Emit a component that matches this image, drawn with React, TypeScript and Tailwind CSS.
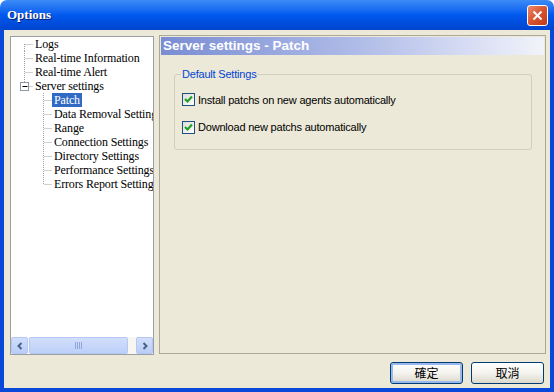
import React from "react";

type Pos = "first" | "mid" | "last";

interface TreeItem {
  label: string;
  depth: number;
  pos: Pos;
  toggle?: boolean;
  selected?: boolean;
}

const items: TreeItem[] = [
  { label: "Logs", depth: 0, pos: "first" },
  { label: "Real-time Information", depth: 0, pos: "mid" },
  { label: "Real-time Alert", depth: 0, pos: "mid" },
  { label: "Server settings", depth: 0, pos: "last", toggle: true },
  { label: "Patch", depth: 1, pos: "mid", selected: true },
  { label: "Data Removal Settings", depth: 1, pos: "mid" },
  { label: "Range", depth: 1, pos: "mid" },
  { label: "Connection Settings", depth: 1, pos: "mid" },
  { label: "Directory Settings", depth: 1, pos: "mid" },
  { label: "Performance Settings", depth: 1, pos: "mid" },
  { label: "Errors Report Settings", depth: 1, pos: "last" },
];

// dotted connector lines drawn in front of each tree label
function Connector({ depth, pos, toggle }: { depth: number; pos: Pos; toggle?: boolean }) {
  const w = 22 + depth * 19;
  const x = 13.5 + depth * 19;
  const y1 = pos === "first" ? 7 : 0;
  const y2 = pos === "last" ? 7 : 14;
  return (
    <svg width={w} height={14} className="shrink-0">
      <line x1={x} y1={y1} x2={x} y2={y2} stroke="#A0A0A0" strokeDasharray="1 1" />
      <line x1={x + 1} y1={7.5} x2={w} y2={7.5} stroke="#A0A0A0" strokeDasharray="1 1" />
      {toggle && (
        <g>
          <rect x={x - 4} y={3.5} width={8} height={8} fill="#fff" stroke="#8A97A8" />
          <line x1={x - 2} y1={7.5} x2={x + 3} y2={7.5} stroke="#000" />
        </g>
      )}
    </svg>
  );
}

function ScrollButton({ dir }: { dir: "left" | "right" }) {
  return (
    <div className="w-[17px] h-[17px] shrink-0 rounded-[2px] border border-[#B4C8F6] bg-gradient-to-b from-[#D2DEFC] to-[#B9CDF7] flex items-center justify-center">
      <svg width="8" height="8" viewBox="0 0 8 8">
        {dir === "left" ? (
          <polyline points="5.5,1 2.5,4 5.5,7" fill="none" stroke="#4D6185" strokeWidth="2" />
        ) : (
          <polyline points="2.5,1 5.5,4 2.5,7" fill="none" stroke="#4D6185" strokeWidth="2" />
        )}
      </svg>
    </div>
  );
}

function CheckBox() {
  return (
    <div className="w-[13px] h-[13px] shrink-0 border border-[#1C5180] bg-gradient-to-br from-[#DCDCD7] to-white flex items-center justify-center">
      <svg width="9" height="9" viewBox="0 0 9 9">
        <polyline points="1,4 3.5,6.5 8,1.5" fill="none" stroke="#21A121" strokeWidth="2.2" />
      </svg>
    </div>
  );
}

function XpButton({ label, primary }: { label: string; primary?: boolean }) {
  return (
    <button
      className={
        "w-[73px] h-[22px] rounded-[3px] border border-[#003C74] bg-gradient-to-b from-white via-[#F4F3EE] to-[#DCD8CC] text-[12px] text-black " +
        (primary ? "shadow-[inset_0_0_0_2px_#98B8EE]" : "")
      }
      style={{ fontFamily: '"Noto Sans CJK TC", "Liberation Sans", sans-serif' }}
    >
      {label}
    </button>
  );
}

export default function App() {
  return (
    <div className="w-[554px] h-[392px] flex flex-col bg-white">
      {/* title bar */}
      <div className="h-[30px] shrink-0 rounded-t-[7px] bg-gradient-to-b from-[#3D8BF7] via-[#0058EE] to-[#0045CF] flex items-center justify-between pl-[7px] pr-[6px]">
        <span
          className="text-white text-[13px] font-bold [text-shadow:1px_1px_0_#0A1E6E]"
          style={{ fontFamily: '"Liberation Serif", serif' }}
        >
          Options
        </span>
        <div className="w-[21px] h-[21px] rounded-[3px] border border-white bg-gradient-to-br from-[#E98A6C] via-[#D9532F] to-[#BF3A17] flex items-center justify-center">
          <svg width="11" height="11" viewBox="0 0 11 11">
            <line x1="1.5" y1="1.5" x2="9.5" y2="9.5" stroke="#fff" strokeWidth="2" />
            <line x1="9.5" y1="1.5" x2="1.5" y2="9.5" stroke="#fff" strokeWidth="2" />
          </svg>
        </div>
      </div>

      {/* dialog body */}
      <div className="flex-1 flex flex-col bg-[#ECE9D8] border-x-4 border-b-4 border-[#0A48DA] pt-[5px] pl-[6px] pr-[4px]">
        <div className="flex items-start gap-[5px]">
          {/* tree view */}
          <div className="mt-[1px] w-[144px] h-[319px] border border-[#9C9EA6] bg-white flex flex-col">
            <div
              className="flex-1 overflow-hidden text-[12px] leading-[14px] tracking-[-0.15px] text-black"
              style={{ fontFamily: '"Liberation Serif", serif' }}
            >
              {items.map((it) => (
                <div key={it.label} className="flex items-center h-[14px] whitespace-nowrap">
                  <Connector depth={it.depth} pos={it.pos} toggle={it.toggle} />
                  <span className={"px-[2px] h-[14px] " + (it.selected ? "bg-[#316AC5] text-white" : "")}>
                    {it.label}
                  </span>
                </div>
              ))}
            </div>
            <div className="h-[17px] flex bg-[#F7F6F1]">
              <ScrollButton dir="left" />
              <div className="ml-[1px] w-[99px] h-[17px] rounded-[2px] border border-[#B4C8F6] bg-gradient-to-b from-[#D2DEFC] to-[#BDD0F8] flex items-center justify-center gap-[1px]">
                <div className="w-[1px] h-[7px] bg-[#8EA6DC]" />
                <div className="w-[1px] h-[7px] bg-[#8EA6DC]" />
                <div className="w-[1px] h-[7px] bg-[#8EA6DC]" />
                <div className="w-[1px] h-[7px] bg-[#8EA6DC]" />
              </div>
              <div className="flex-1" />
              <ScrollButton dir="right" />
            </div>
          </div>

          {/* settings page */}
          <div className="w-[387px] h-[319px] border border-[#ACA899] p-[1px]">
            <div
              className="h-[18px] bg-gradient-to-r from-[#7A8DD3] via-[#AEBAE7] to-[#F2F3FA] text-white text-[13.5px] font-bold leading-[18px] pl-[2px]"
              style={{ fontFamily: '"Liberation Sans", sans-serif' }}
            >
              Server settings - Patch
            </div>
            <fieldset
              className="mt-[11px] ml-[13px] mr-[12px] h-[84px] border border-[#D0D0BF] rounded-[3px] pl-[7px] text-[11px] tracking-[-0.2px]"
              style={{ fontFamily: '"Liberation Sans", sans-serif' }}
            >
              <legend className="-ml-px px-[1px] text-[#0046D5]">Default Settings</legend>
              <div className="mt-[9px] flex flex-col gap-[11px]">
                <div className="flex items-center gap-[3px]">
                  <CheckBox />
                  <span>Install patchs on new agents automatically</span>
                </div>
                <div className="flex items-center gap-[3px]">
                  <CheckBox />
                  <span>Download new patchs automatically</span>
                </div>
              </div>
            </fieldset>
          </div>
        </div>

        <div className="mt-[7px] flex justify-end gap-[8px] pr-[2px]">
          <XpButton label="確定" primary />
          <XpButton label="取消" />
        </div>
      </div>
    </div>
  );
}
